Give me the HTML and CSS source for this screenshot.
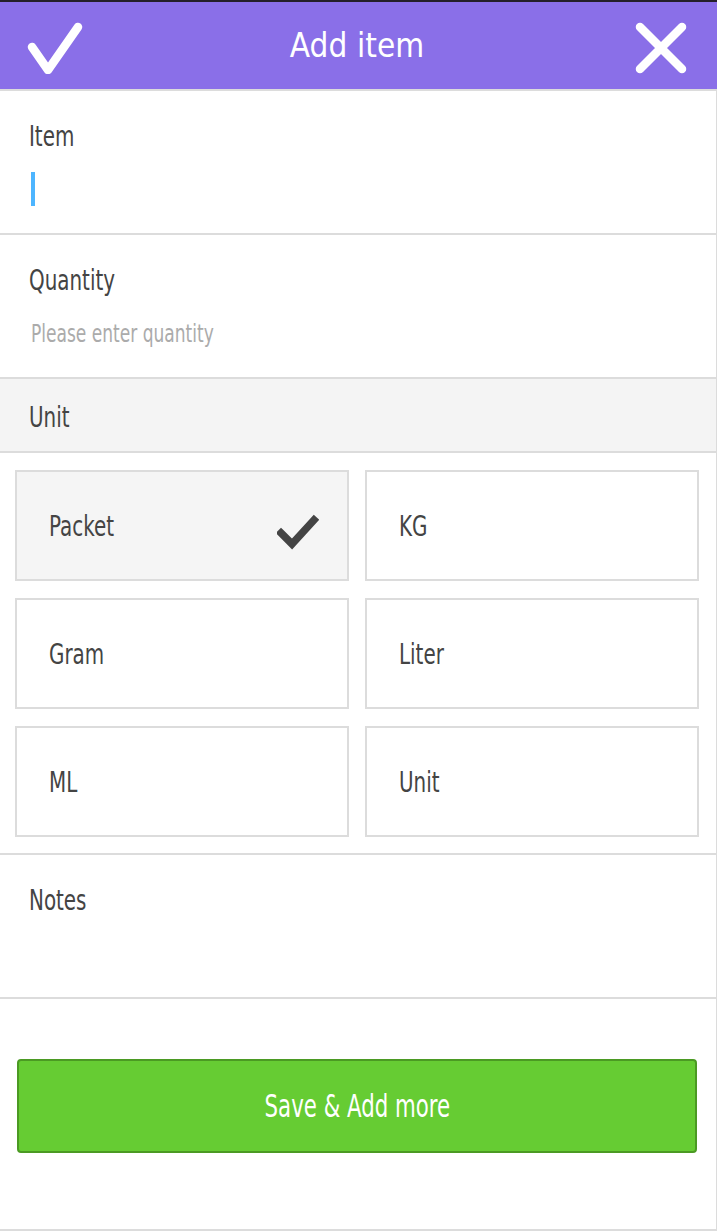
FILE: index.html
```html
<!DOCTYPE html>
<html>
<head>
<meta charset="utf-8">
<title>Add item</title>
<link rel="stylesheet" href="styles.css">
</head>
<body>
<div class="topline"></div>
<header class="bar">
  <button class="bar-btn" aria-label="Confirm">
    <svg width="58" height="52" viewBox="0 0 58 52"><polyline points="6,25 22,48 52,5" fill="none" stroke="#fff" stroke-width="8.5" stroke-linecap="round" stroke-linejoin="round"/></svg>
  </button>
  <h1 class="bar-title">Add item</h1>
  <button class="bar-btn" aria-label="Close">
    <svg width="54" height="52" viewBox="0 0 54 52"><path d="M6 5 L48 47 M48 5 L6 47" fill="none" stroke="#fff" stroke-width="8.5" stroke-linecap="round"/></svg>
  </button>
</header>
<main class="content">
  <section class="field">
    <label class="field-label"><span class="t">Item</span></label>
    <div class="field-input"><span class="caret"></span></div>
  </section>
  <section class="field">
    <label class="field-label"><span class="t">Quantity</span></label>
    <div class="field-input placeholder"><span class="t">Please enter quantity</span></div>
  </section>
  <section class="unit-head"><span class="t">Unit</span></section>
  <section class="unit-grid">
    <div class="unit selected"><span class="t">Packet</span>
      <svg class="tick" width="42" height="38" viewBox="0 0 42 38"><polyline points="4,20 15,31 37,7" fill="none" stroke="#444" stroke-width="7.5" stroke-linecap="square" stroke-linejoin="miter"/></svg>
    </div>
    <div class="unit"><span class="t">KG</span></div>
    <div class="unit"><span class="t">Gram</span></div>
    <div class="unit"><span class="t">Liter</span></div>
    <div class="unit"><span class="t">ML</span></div>
    <div class="unit"><span class="t">Unit</span></div>
  </section>
  <section class="field notes">
    <label class="field-label"><span class="t">Notes</span></label>
  </section>
  <section class="footer">
    <button class="save"><span class="save-text">Save &amp; Add more</span></button>
  </section>
</main>
</body>
</html>
```
FILE: styles.css
```css
* { box-sizing: border-box; }
html, body { margin: 0; padding: 0; }
body {
  width: 717px;
  height: 1232px;
  background: #fff;
  font-family: "DejaVu Sans Condensed", "DejaVu Sans", sans-serif;
  color: #444;
  overflow: hidden;
}
.t {
  display: inline-block;
  transform: scaleX(0.79);
  transform-origin: left center;
  white-space: nowrap;
}
.topline { height: 2px; background: #241f2a; }
.bar {
  height: 89px;
  background: #8a6fe8;
  border-bottom: 2px solid #dcdcdc;
  display: flex;
  align-items: center;
  justify-content: space-between;
  padding: 0 29px 0 26px;
}
.bar-btn {
  background: none;
  border: 0;
  padding: 0;
  display: flex;
  margin-top: 5px;
}
.bar-title {
  margin: 0 4px 0 0;
  font-weight: normal;
  font-size: 33px;
  color: #fff;
  letter-spacing: 0.1px;
}
.content {
  border-right: 1px solid #dcdcdc;
}
.field {
  height: 144px;
  border-bottom: 2px solid #dcdcdc;
  padding: 31px 29px 0;
}
.field-label {
  display: block;
  font-size: 28px;
  line-height: 30px;
  color: #444;
}
.field-input {
  margin-top: 22px;
  height: 30px;
  font-size: 24px;
  line-height: 30px;
  padding-left: 2px;
}
.caret {
  display: block;
  width: 4px;
  height: 34px;
  background: #4db5ff;
  margin-top: -2px;
}
.placeholder { color: #ababab; margin-top: 23px; }
.unit-head {
  height: 74px;
  background: #f4f4f4;
  border-bottom: 2px solid #dcdcdc;
  font-size: 28px;
  line-height: 30px;
  padding: 24px 29px 0;
}
.unit-grid {
  height: 402px;
  border-bottom: 2px solid #dcdcdc;
  padding: 17px 0 0 15px;
  display: grid;
  grid-template-columns: 334px 334px;
  grid-template-rows: 111px 111px 111px;
  column-gap: 16px;
  row-gap: 17px;
}
.unit {
  border: 2px solid #dcdcdc;
  background: #fff;
  display: flex;
  align-items: center;
  justify-content: space-between;
  padding: 2px 28px 0 32px;
  font-size: 28px;
}
.unit.selected { background: #f5f5f5; }
.tick { margin-top: 10px; }
.notes { height: 144px; padding-top: 31px; }
.footer {
  height: 232px;
  border-bottom: 2px solid #dcdcdc;
  padding: 60px 20px 0 17px;
}
.save {
  width: 680px;
  height: 94px;
  background: #66cc33;
  border: 2px solid #4b9a23;
  border-radius: 4px;
  color: #fff;
  font-family: inherit;
  font-size: 32px;
  display: flex;
  align-items: center;
  justify-content: center;
  padding: 0;
}
.save-text {
  display: inline-block;
  transform: scaleX(0.74);
  white-space: nowrap;
}
```
